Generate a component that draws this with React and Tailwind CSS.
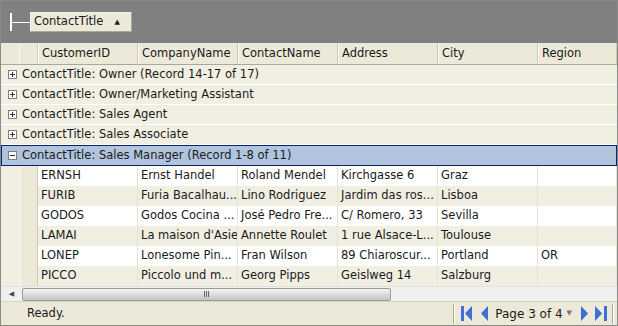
import React from 'react';

const columns = ['CustomerID', 'CompanyName', 'ContactName', 'Address', 'City', 'Region'];

const groups = [
  'ContactTitle: Owner (Record 14-17 of 17)',
  'ContactTitle: Owner/Marketing Assistant',
  'ContactTitle: Sales Agent',
  'ContactTitle: Sales Associate',
];

const rows = [
  ['ERNSH', 'Ernst Handel', 'Roland Mendel', 'Kirchgasse 6', 'Graz', ''],
  ['FURIB', 'Furia Bacalhau...', 'Lino Rodriguez', 'Jardim das ros...', 'Lisboa', ''],
  ['GODOS', 'Godos Cocina ...', 'José Pedro Fre...', 'C/ Romero, 33', 'Sevilla', ''],
  ['LAMAI', "La maison d'Asie", 'Annette Roulet', '1 rue Alsace-L...', 'Toulouse', ''],
  ['LONEP', 'Lonesome Pin...', 'Fran Wilson', '89 Chiaroscur...', 'Portland', 'OR'],
  ['PICCO', 'Piccolo und m...', 'Georg Pipps', 'Geislweg 14', 'Salzburg', ''],
];

const ExpandBox = ({ open }) => (
  <svg width="9" height="9" viewBox="0 0 9 9" className="shrink-0">
    <rect x="0.5" y="0.5" width="8" height="8" fill="#fff" stroke="#7f7f7f" />
    <line x1="2" y1="4.5" x2="7" y2="4.5" stroke="#333" />
    {!open && <line x1="4.5" y1="2" x2="4.5" y2="7" stroke="#333" />}
  </svg>
);

const PagerIcon = ({ kind, className }) => {
  const fill = '#3d6fd8';
  if (kind === 'first')
    return (
      <svg width="11" height="15" viewBox="0 0 11 15" className={className}>
        <rect x="0" y="0" width="3" height="15" fill={fill} />
        <path d="M11 0 L4 7.5 L11 15 Z" fill={fill} />
      </svg>
    );
  if (kind === 'prev')
    return (
      <svg width="7" height="15" viewBox="0 0 7 15" className={className}>
        <path d="M7 0 L0 7.5 L7 15 Z" fill={fill} />
      </svg>
    );
  if (kind === 'next')
    return (
      <svg width="7" height="15" viewBox="0 0 7 15" className={className}>
        <path d="M0 0 L7 7.5 L0 15 Z" fill={fill} />
      </svg>
    );
  return (
    <svg width="12" height="15" viewBox="0 0 12 15" className={className}>
      <path d="M0 0 L7 7.5 L0 15 Z" fill={fill} />
      <rect x="9" y="0" width="3" height="15" fill={fill} />
    </svg>
  );
};

export default function App() {
  return (
    <div
      className="w-[618px] h-[326px] overflow-hidden flex flex-col border border-[#8a8a8a] bg-white text-[11.5px] text-[#1a1a1a]"
      style={{ fontFamily: '"DejaVu Sans", Verdana, sans-serif' }}
    >
      {/* group-by panel */}
      <div className="h-[42px] shrink-0 bg-[#808080] flex items-center pl-[9px]">
        <div className="flex items-center">
          <div className="w-[2px] h-[18px] bg-white" />
          <div className="w-[18px] h-[1px] bg-white" />
        </div>
        <div className="h-[20px] w-[102px] bg-[#ece9d8] border-t border-l border-[#f4f3ec] border-b border-r border-b-[#aca899] border-r-[#aca899] flex items-center pl-[3px]">
          <span>ContactTitle</span>
          <span className="ml-auto mr-[11px] text-[7px] leading-none">▲</span>
        </div>
      </div>

      {/* header */}
      <div className="h-[22px] shrink-0 flex bg-[#ece9d8] border-b border-[#aca899]">
        <div className="w-[19px] shrink-0 border-r border-[#f7f6f0]" />
        <div className="w-[18px] shrink-0 border-r border-[#d4d0c0]" />
        {columns.map((c, i) => (
          <div
            key={c}
            className={`${i === 5 ? 'flex-1' : 'w-[100px] shrink-0'} border-l border-[#fbfaf5] border-r border-r-[#cdc9b8] pl-[3px] flex items-center`}
          >
            {c}
          </div>
        ))}
      </div>

      {/* group rows */}
      {groups.map((g) => (
        <div
          key={g}
          className="h-[20px] shrink-0 flex items-center bg-[#f1efe2] border-b border-white pl-[7px] gap-[5px]"
        >
          <ExpandBox />
          <span>{g}</span>
        </div>
      ))}
      <div className="h-[21px] shrink-0 flex items-center bg-[#b0c4de] border border-[#0a246a] pl-[6px] gap-[5px]">
        <ExpandBox open />
        <span>ContactTitle: Sales Manager (Record 1-8 of 11)</span>
      </div>

      {/* data rows */}
      {rows.map((r, ri) => (
        <div key={r[0]} className={`h-[20px] shrink-0 flex ${ri % 2 ? 'bg-[#f1efe2]' : 'bg-white'}`}>
          <div className="w-[19px] shrink-0 bg-[#f1efe2]" />
          <div className="w-[18px] shrink-0 bg-[#ece9d8] border-l border-[#f8f7f1] border-r border-r-[#cdc9b8]" />
          {r.map((v, i) => (
            <div
              key={i}
              className={`${i === 5 ? 'flex-1' : 'w-[100px] shrink-0'} border-r border-[#e6e3d6] pl-[3px] flex items-center whitespace-nowrap overflow-hidden`}
            >
              {v}
            </div>
          ))}
        </div>
      ))}

      {/* horizontal scrollbar */}
      <div className="h-[15px] shrink-0 flex items-center bg-[#f0f0f0] border-t border-[#e2e2e2]">
        <div className="w-[21px] flex justify-center text-[7px] text-[#444]">◀</div>
        <div className="w-[369px] h-[13px] rounded-[2px] border border-[#9a9a9a] bg-gradient-to-b from-[#f4f4f4] via-[#dcdcdc] to-[#c4c4c4] flex items-center justify-center">
          <div className="flex gap-[1px]">
            <div className="w-[1px] h-[6px] bg-[#666]" />
            <div className="w-[1px] h-[6px] bg-[#666]" />
            <div className="w-[1px] h-[6px] bg-[#666]" />
          </div>
        </div>
      </div>

      {/* status bar */}
      <div className="flex-1 flex items-center bg-[#ece9d8] border-t border-[#d6d3c4]">
        <span className="ml-[26px]">Ready.</span>
        <div className="ml-auto flex items-center h-full">
          <div className="w-[2px] h-[20px] border-l border-[#aca899] border-r border-r-white" />
          <PagerIcon kind="first" className="ml-[6px]" />
          <PagerIcon kind="prev" className="ml-[9px]" />
          <span className="ml-[7px] text-[12px]">Page 3 of 4</span>
          <span className="ml-[4px] text-[7px] text-[#777]">▼</span>
          <PagerIcon kind="next" className="ml-[9px]" />
          <PagerIcon kind="last" className="ml-[7px]" />
          <div className="w-[2px] h-[20px] ml-[5px] mr-[3px] border-l border-[#aca899] border-r border-r-white" />
        </div>
      </div>
    </div>
  );
}
